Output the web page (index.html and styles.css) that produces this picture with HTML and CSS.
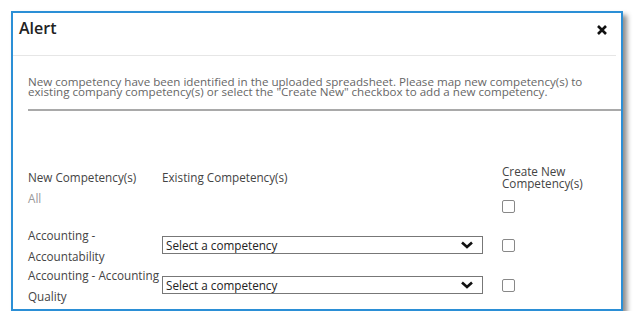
FILE: index.html
```html
<!DOCTYPE html>
<html lang="en">
<head>
    <meta charset="UTF-8">
    <meta name="viewport" content="width=device-width, initial-scale=1.0">
    <title>Alert</title>
    <link rel="stylesheet" href="styles.css">
</head>
<body>
    <div class="dialog">
        <div class="dialog-header">
            <h2>Alert</h2>
            <svg class="close" width="10" height="10" viewBox="0 0 10 10"><path d="M1 1 L9 9 M9 1 L1 9" stroke="#111" stroke-width="2.6"/></svg>
        </div>
        <div class="dialog-body">
            <p class="intro">New competency have been identified in the uploaded spreadsheet. Please map new competency(s) to existing company competency(s) or select the "Create New" checkbox to add a new competency.</p>
            <div class="divider"></div>

            <div class="map-grid">
                <div class="head">New Competency(s)</div>
                <div class="head">Existing Competency(s)</div>
                <div></div>
                <div class="head">Create New Competency(s)</div>

                <div class="all">All</div>
                <div></div>
                <div></div>
                <div class="check-top"><input type="checkbox" class="check"></div>

                <div class="label">Accounting - Accountability</div>
                <div class="picker">
                    <span>Select a competency</span>
                    <svg width="14" height="10" viewBox="0 0 14 10"><path d="M2 2.5 L7 7 L12 2.5" fill="none" stroke="#111" stroke-width="2.6"/></svg>
                </div>
                <div></div>
                <div class="check-cell"><input type="checkbox" class="check"></div>

                <div class="label">Accounting - Accounting Quality</div>
                <div class="picker">
                    <span>Select a competency</span>
                    <svg width="14" height="10" viewBox="0 0 14 10"><path d="M2 2.5 L7 7 L12 2.5" fill="none" stroke="#111" stroke-width="2.6"/></svg>
                </div>
                <div></div>
                <div class="check-cell"><input type="checkbox" class="check"></div>
            </div>
        </div>
    </div>
</body>
</html>
```

FILE: styles.css
```css
body {
    margin: 0;
    background-color: #fff;
    font-family: "Open Sans", sans-serif;
    color: #444;
}
.dialog {
    margin: 11px 0 0 11px;
    width: 608px;
    height: 296px;
    border: 2px solid #2b8fd6;
    box-shadow: 4px 4px 5px rgba(0, 0, 0, 0.45);
    background-color: #fff;
}
.dialog-header {
    height: 42px;
    margin-right: 5px;
    padding: 0 9px 0 6px;
    display: flex;
    align-items: flex-start;
    justify-content: space-between;
    border-bottom: 1px solid #e6e6e6;
}
.dialog-header h2 {
    margin: 4px 0 0;
    font-size: 16px;
    line-height: 22px;
    font-weight: 600;
    color: #222;
}
.close {
    margin-top: 12px;
}
.dialog-body {
    padding-left: 15px;
}
/* the source text is drawn wide and tight */
.intro {
    width: 500px;
    margin: 22px 0 0;
    font-size: 10px;
    line-height: 9.5px;
    color: #666;
    transform: scaleX(1.16);
    transform-origin: left top;
}
.divider {
    margin-top: 12px;
    height: 2px;
    background-color: #a9a9a9;
}
.map-grid {
    margin-top: 54px;
    display: grid;
    grid-template-columns: 134px 321px 19px 90px;
    grid-template-rows: 24px 36px 40px 40px;
    font-size: 11.7px;
}
.head {
    align-self: center;
    line-height: 12px;
}
.all {
    color: #999;
    line-height: 18px;
}
.check-top {
    padding-top: 11px;
}
.label {
    margin-right: -8px;
    line-height: 21px;
}
.picker {
    align-self: center;
    height: 16px;
    border: 1px solid #777;
    display: flex;
    align-items: center;
    justify-content: space-between;
    padding: 0 8px 0 3px;
    color: #222;
}
.check-cell {
    display: flex;
    align-items: center;
}
.check {
    -webkit-appearance: none;
    appearance: none;
    display: block;
    margin: 0;
    width: 13px;
    height: 13px;
    border: 1px solid #888;
    border-radius: 2px;
}
```
